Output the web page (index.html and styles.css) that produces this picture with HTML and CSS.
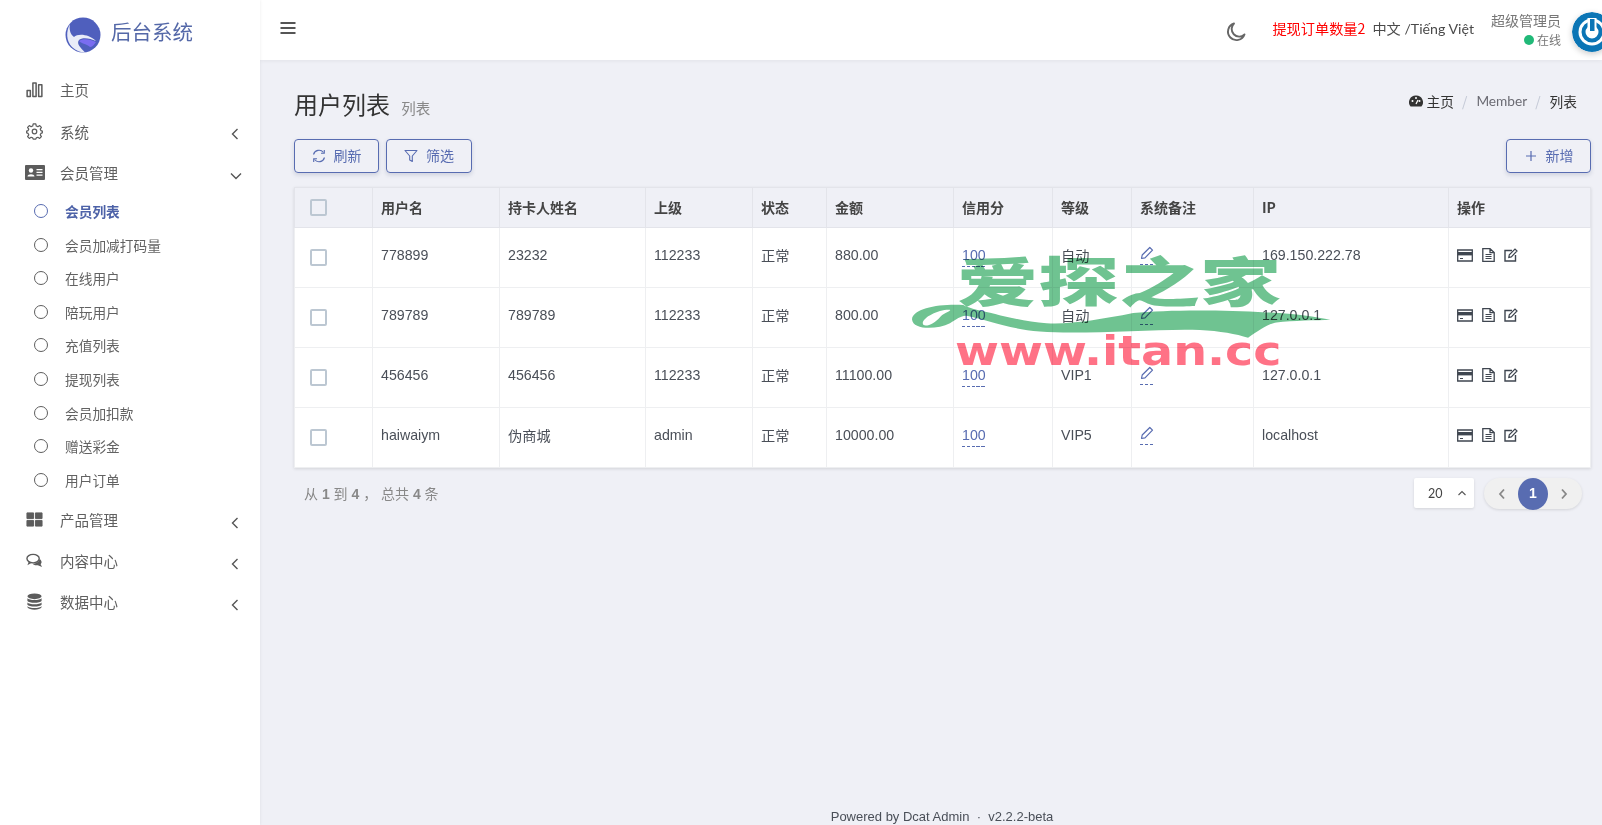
FILE: index.html
```html
<!DOCTYPE html>
<html>
<head>
    <title>后台系统</title>
    <link rel="stylesheet" href="styles.css">
</head>
<body>
    <svg class="icon-defs" xmlns="http://www.w3.org/2000/svg">
        <symbol id="i-chev-left" viewBox="0 0 10 14"><path d="M7.5 2 L2.5 7 L7.5 12" fill="none" stroke="currentColor" stroke-width="1.4"/></symbol>
        <symbol id="i-chev-down" viewBox="0 0 14 10"><path d="M2 2.5 L7 7.5 L12 2.5" fill="none" stroke="currentColor" stroke-width="1.4"/></symbol>
        <symbol id="i-pencil" viewBox="0 0 14 14"><path d="M1.5 12.5 L2.2 9 L9.8 1.5 L12.5 4.2 L5 11.8 Z" fill="none" stroke="currentColor" stroke-width="1.2" stroke-linejoin="round"/></symbol>
        <symbol id="i-card" viewBox="0 0 16 13"><path d="M.7 1 H15.3 V12 H.7 Z" fill="none" stroke="currentColor" stroke-width="1.3"/><rect x="1" y="3" width="14" height="3.4" fill="currentColor"/><path d="M3 9.5 H6" stroke="currentColor"/></symbol>
        <symbol id="i-file" viewBox="0 0 13 14"><path d="M.8 .7 H8 L12.2 4.6 V13.3 H.8 Z M8 .7 V4.6 H12.2" fill="none" stroke="currentColor" stroke-width="1.3"/><path d="M3.5 6.5 H9.5 M3.5 8.5 H9.5 M3.5 10.5 H9.5" stroke="currentColor"/></symbol>
        <symbol id="i-edit" viewBox="0 0 14 14"><path d="M8 2.5 H1 V13 H11.5 V7" fill="none" stroke="currentColor" stroke-width="1.4"/><path d="M4.8 9.4 L5.3 6.8 L11 1 L13 3 L7.3 8.9 Z" fill="none" stroke="currentColor" stroke-width="1.2"/></symbol>
    </svg>

    <div class="sidebar">
        <div class="brand">
            <svg class="brand-logo" viewBox="0 0 36 36">
                <circle cx="18" cy="18" r="17.5" fill="#4f5fbd"/>
                <path d="M5 7 C1 14 1 24 7 30 C11 34 16 35.5 20 35.5 C16 31 11 27 14 23 C17 20 25 21 31 24 C24 17 13 16 9 20 C5 17 4 12 5 7 Z" fill="#e9ecf8"/>
                <path d="M14 24 C18 21 25 22 31 25 C29 28 27 30 25 30 C22 27 17 27 14 24 Z" fill="#7a6df0"/>
            </svg>
            <span class="brand-name">后台系统</span>
        </div>
        <ul class="nav">
            <li class="nav-item">
                <svg class="nav-icon" viewBox="0 0 18 18"><path d="M1.2 10 H4.6 V16.5 H1.2 Z M7.3 2 H10.7 V16.5 H7.3 Z M13.4 4 H16.8 V16.5 H13.4 Z" fill="none" stroke="currentColor" stroke-width="1.6" stroke-linejoin="round"/></svg>
                <span class="nav-text">主页</span>
            </li>
            <li class="nav-item">
                <svg class="nav-icon" viewBox="0 0 18 18"><circle cx="9" cy="9" r="2.4" fill="none" stroke="currentColor" stroke-width="1.3"/><path d="M7.6 1 H10.4 L10.9 3.2 L12.6 3.9 L14.5 2.7 L16.3 4.6 L15.1 6.5 L15.8 8 L17.3 8.6 V10.4 L15.8 11 L15.1 12.5 L16.3 14.4 L14.5 16.3 L12.6 15.1 L10.9 15.8 L10.4 17 H7.6 L7.1 15.8 L5.4 15.1 L3.5 16.3 L1.7 14.4 L2.9 12.5 L2.2 11 L.7 10.4 V8.6 L2.2 8 L2.9 6.5 L1.7 4.6 L3.5 2.7 L5.4 3.9 L7.1 3.2 Z" fill="none" stroke="currentColor" stroke-width="1.3" stroke-linejoin="round"/></svg>
                <span class="nav-text">系统</span>
                <svg class="nav-arrow"><use href="#i-chev-left"/></svg>
            </li>
            <li class="nav-item">
                <svg class="nav-icon nav-icon-wide" viewBox="0 0 20 15"><path d="M1 0 H19 A1 1 0 0 1 20 1 V14 A1 1 0 0 1 19 15 H1 A1 1 0 0 1 0 14 V1 A1 1 0 0 1 1 0 Z" fill="currentColor"/><circle cx="6" cy="5.5" r="2.2" fill="#fff"/><path d="M2.5 11.5 C2.5 8.5 9.5 8.5 9.5 11.5 Z M11.5 4 H17.5 V5.2 H11.5 Z M11.5 6.8 H17.5 V8 H11.5 Z M11.5 9.6 H17.5 V10.8 H11.5 Z" fill="#fff"/></svg>
                <span class="nav-text">会员管理</span>
                <svg class="nav-arrow nav-arrow-down"><use href="#i-chev-down"/></svg>
            </li>
            <li class="sub-list">
                <div class="sub-item active"><span class="ring"></span>会员列表</div>
                <div class="sub-item"><span class="ring"></span>会员加减打码量</div>
                <div class="sub-item"><span class="ring"></span>在线用户</div>
                <div class="sub-item"><span class="ring"></span>陪玩用户</div>
                <div class="sub-item"><span class="ring"></span>充值列表</div>
                <div class="sub-item"><span class="ring"></span>提现列表</div>
                <div class="sub-item"><span class="ring"></span>会员加扣款</div>
                <div class="sub-item"><span class="ring"></span>赠送彩金</div>
                <div class="sub-item"><span class="ring"></span>用户订单</div>
            </li>
            <li class="nav-item">
                <svg class="nav-icon" viewBox="0 0 18 16"><path d="M1 1 H8 V7 H1 Z M10 1 H17 V7 H10 Z M1 9 H8 V15 H1 Z M10 9 H17 V15 H10 Z" fill="currentColor" stroke="currentColor" stroke-linejoin="round"/></svg>
                <span class="nav-text">产品管理</span>
                <svg class="nav-arrow"><use href="#i-chev-left"/></svg>
            </li>
            <li class="nav-item">
                <svg class="nav-icon" viewBox="0 0 18 16"><ellipse cx="7.5" cy="6" rx="6.5" ry="4.5" fill="none" stroke="currentColor" stroke-width="1.5"/><path d="M3 9 L1.5 13 L6 10.5 Z" fill="currentColor"/><path d="M14.5 6.5 C17.5 9 16.5 11 15.5 12 L17 15 L12.5 13 C10 13.5 7.5 12.5 7 11.5 C10.5 11.5 13.5 10 14.5 6.5 Z" fill="currentColor"/></svg>
                <span class="nav-text">内容中心</span>
                <svg class="nav-arrow"><use href="#i-chev-left"/></svg>
            </li>
            <li class="nav-item">
                <svg class="nav-icon" viewBox="0 0 18 18"><ellipse cx="9" cy="3.5" rx="7.5" ry="3" fill="currentColor"/><path d="M1.5 5.5 C3 8 15 8 16.5 5.5 V8.5 C15 11 3 11 1.5 8.5 Z M1.5 10 C3 12.5 15 12.5 16.5 10 V12.5 C15 15 3 15 1.5 12.5 Z M1.5 14 C3 16.5 15 16.5 16.5 14 V15 C15 18.5 3 18.5 1.5 15 Z" fill="currentColor"/></svg>
                <span class="nav-text">数据中心</span>
                <svg class="nav-arrow"><use href="#i-chev-left"/></svg>
            </li>
        </ul>
    </div>

    <div class="main">
        <div class="navbar">
            <svg class="hamburger" viewBox="0 0 16 14"><path d="M.5 2 H15.5 M.5 7 H15.5 M.5 12 H15.5" stroke="#555" stroke-width="1.8"/></svg>
            <div class="navbar-right">
                <svg class="moon" viewBox="0 0 20 20"><path d="M8 1.5 A8.5 8.5 0 1 0 18.5 12.5 A7.5 7.5 0 0 1 8 1.5 Z" fill="none" stroke="#666" stroke-width="1.9" stroke-linejoin="round"/></svg>
                <span class="order-count">提现订单数量2</span>
                <span class="lang">中文 /Tiếng Việt</span>
                <div class="user">
                    <div class="user-name">超级管理员</div>
                    <div class="user-status"><span class="dot"></span>在线</div>
                </div>
                <svg class="avatar" viewBox="0 0 40 40">
                    <circle cx="20" cy="20" r="20" fill="#0b75b5"/>
                    <circle cx="20" cy="20" r="13.5" fill="#fff"/>
                    <circle cx="20" cy="20" r="8.5" fill="none" stroke="#0b75b5" stroke-width="4"/>
                    <rect x="15.5" y="6" width="9" height="11" fill="#fff"/>
                    <rect x="18" y="7" width="4.5" height="12" fill="#0b75b5"/>
                </svg>
            </div>
        </div>

        <div class="content">
            <div class="page-head">
                <div>
                    <span class="page-title">用户列表</span>
                    <span class="page-sub">列表</span>
                </div>
                <div class="crumbs">
                    <svg class="crumb-icon" viewBox="0 0 14 12"><path d="M7 .5 A6.7 6.7 0 0 0 1.6 11.5 H12.4 A6.7 6.7 0 0 0 7 .5 Z" fill="#333"/><circle cx="7" cy="3" r="1" fill="#fff"/><circle cx="3.5" cy="6" r="1" fill="#fff"/><circle cx="10.5" cy="6" r="1" fill="#fff"/><path d="M7 9 L9 5" stroke="#fff" stroke-width="1.2"/></svg>
                    <span class="crumb-dark">主页</span>
                    <span class="crumb-sep">/</span>
                    <span class="crumb-mid">Member</span>
                    <span class="crumb-sep">/</span>
                    <span class="crumb-dark">列表</span>
                </div>
            </div>

            <div class="toolbar">
                <div class="btn-group">
                    <div class="btn">
                        <svg class="btn-icon" viewBox="0 0 14 14"><path d="M1.5 5.5 A5.7 5.7 0 0 1 11.5 3.5 M12.5 8.5 A5.7 5.7 0 0 1 2.5 10.5" fill="none" stroke="currentColor" stroke-width="1.1"/><path d="M12.3 1 V4.3 H9 M1.7 13 V9.7 H5" fill="none" stroke="currentColor" stroke-width="1.1"/></svg>
                        <span class="btn-text">刷新</span>
                    </div>
                    <div class="btn btn-wide">
                        <svg class="btn-icon" viewBox="0 0 14 14"><path d="M1 1.5 H13 L8.3 7 V12.5 L5.7 11 V7 Z" fill="none" stroke="currentColor" stroke-width="1.1" stroke-linejoin="round"/></svg>
                        <span class="btn-text">筛选</span>
                    </div>
                </div>
                <div class="btn">
                    <svg class="btn-icon" viewBox="0 0 14 14"><path d="M7 2 V12 M2 7 H12" stroke="currentColor" stroke-width="1.2"/></svg>
                    <span class="btn-text">新增</span>
                </div>
            </div>

            <table class="grid">
                <colgroup>
                    <col class="c-check"><col class="c-user"><col class="c-name"><col class="c-parent"><col class="c-state"><col class="c-money"><col class="c-score"><col class="c-level"><col class="c-note"><col class="c-ip"><col>
                </colgroup>
                <thead>
                    <tr>
                        <th class="cell-check"><span class="check"></span></th>
                        <th>用户名</th><th>持卡人姓名</th><th>上级</th><th>状态</th><th>金额</th><th>信用分</th><th>等级</th><th>系统备注</th><th>IP</th><th>操作</th>
                    </tr>
                </thead>
                <tbody>
                    <tr>
                        <td class="cell-check"><span class="check"></span></td>
                        <td>778899</td><td>23232</td><td>112233</td><td>正常</td><td>880.00</td>
                        <td><span class="editable">100</span></td><td>自动</td>
                        <td><span class="editable"><svg class="pencil"><use href="#i-pencil"/></svg></span></td>
                        <td>169.150.222.78</td>
                        <td><div class="actions"><svg class="a-card"><use href="#i-card"/></svg><svg class="a-file"><use href="#i-file"/></svg><svg class="a-edit"><use href="#i-edit"/></svg></div></td>
                    </tr>
                    <tr>
                        <td class="cell-check"><span class="check"></span></td>
                        <td>789789</td><td>789789</td><td>112233</td><td>正常</td><td>800.00</td>
                        <td><span class="editable">100</span></td><td>自动</td>
                        <td><span class="editable"><svg class="pencil"><use href="#i-pencil"/></svg></span></td>
                        <td>127.0.0.1</td>
                        <td><div class="actions"><svg class="a-card"><use href="#i-card"/></svg><svg class="a-file"><use href="#i-file"/></svg><svg class="a-edit"><use href="#i-edit"/></svg></div></td>
                    </tr>
                    <tr>
                        <td class="cell-check"><span class="check"></span></td>
                        <td>456456</td><td>456456</td><td>112233</td><td>正常</td><td>11100.00</td>
                        <td><span class="editable">100</span></td><td>VIP1</td>
                        <td><span class="editable"><svg class="pencil"><use href="#i-pencil"/></svg></span></td>
                        <td>127.0.0.1</td>
                        <td><div class="actions"><svg class="a-card"><use href="#i-card"/></svg><svg class="a-file"><use href="#i-file"/></svg><svg class="a-edit"><use href="#i-edit"/></svg></div></td>
                    </tr>
                    <tr>
                        <td class="cell-check"><span class="check"></span></td>
                        <td>haiwaiym</td><td>伪商城</td><td>admin</td><td>正常</td><td>10000.00</td>
                        <td><span class="editable">100</span></td><td>VIP5</td>
                        <td><span class="editable"><svg class="pencil"><use href="#i-pencil"/></svg></span></td>
                        <td>localhost</td>
                        <td><div class="actions"><svg class="a-card"><use href="#i-card"/></svg><svg class="a-file"><use href="#i-file"/></svg><svg class="a-edit"><use href="#i-edit"/></svg></div></td>
                    </tr>
                </tbody>
            </table>

            <div class="table-foot">
                <div class="summary">从 <b>1</b> 到 <b>4</b> ， 总共 <b>4</b> 条</div>
                <div class="paging">
                    <div class="per-page">20<svg class="per-arrow" viewBox="0 0 10 6"><path d="M1.5 5 L5 1.5 L8.5 5" fill="none" stroke="#555" stroke-width="1.1"/></svg></div>
                    <div class="pager">
                        <svg class="pager-arrow" viewBox="0 0 8 12"><path d="M6 1.5 L2 6 L6 10.5" fill="none" stroke="#888" stroke-width="1.8"/></svg>
                        <span class="pager-num">1</span>
                        <svg class="pager-arrow" viewBox="0 0 8 12"><path d="M2 1.5 L6 6 L2 10.5" fill="none" stroke="#888" stroke-width="1.8"/></svg>
                    </div>
                </div>
            </div>
        </div>

        <div class="footer">Powered by Dcat Admin &nbsp;·&nbsp; v2.2.2-beta</div>
    </div>

    <!-- watermark over the table -->
    <div class="watermark">
        <svg class="wm-swoosh" viewBox="30 220 1270 110" preserveAspectRatio="none"><path d="M190 226 C120 222 40 235 36 268 C38 300 110 300 150 280 C170 268 185 256 200 258 C260 270 320 296 420 305 C560 315 780 295 900 300 C960 303 1010 312 1045 323 C1080 300 1110 280 1130 278 C1180 272 1250 272 1292 270 C1250 262 1180 250 1100 248 C960 240 800 240 700 250 C600 270 500 285 440 280 C360 275 280 250 230 240 C215 236 200 232 190 226 Z M70 285 C60 270 100 245 140 240 C170 238 130 250 120 262 C105 280 80 292 70 285 Z" fill="#6fc391" fill-rule="evenodd"/></svg>
        <div class="wm-cn">爱探之家</div>
        <div class="wm-url">www.itan.cc</div>
    </div>
</body>
</html>
```

FILE: styles.css
```css
* {
    box-sizing: border-box;
}

html, body {
    height: 100%;
}

body {
    margin: 0;
    display: flex;
    overflow: hidden;
    background: #eff0f6;
    font-family: "Liberation Sans", "Noto Sans CJK SC", sans-serif;
    font-size: 14px;
    color: #414750;
    position: relative;
}

.icon-defs {
    position: absolute;
    width: 0;
    height: 0;
}

/* sidebar */
.sidebar {
    width: 260px;
    flex-shrink: 0;
    background: #fff;
    box-shadow: 0 0 3px rgba(0, 0, 0, 0.08);
    z-index: 2;
}

.brand {
    height: 69px;
    display: flex;
    align-items: flex-start;
    padding: 17px 0 0 65px;
}

.brand-logo {
    width: 36px;
    height: 36px;
    margin-right: 10px;
}

.brand-name {
    font-family: "Noto Sans CJK SC", sans-serif;
    font-size: 20.5px;
    line-height: 29px;
    color: #5468a8;
}

.nav {
    list-style: none;
    margin: 0;
    padding: 0;
    color: #5c5c5c;
}

.nav-item {
    height: 41.4px;
    display: flex;
    align-items: center;
    position: relative;
    padding-left: 26px;
    font-family: "Noto Sans CJK SC", sans-serif;
}

.nav-icon {
    width: 17px;
    height: 17px;
    margin-right: 17px;
    flex-shrink: 0;
}

.nav-icon-wide {
    width: 20px;
    height: 15px;
    margin-left: -1px;
    margin-right: 15px;
}

.nav-text {
    font-size: 14.5px;
    color: #5f5f5f;
}

.nav-arrow {
    position: absolute;
    left: 230px;
    top: 17px;
    width: 10px;
    height: 14px;
    color: #555;
}

.nav-arrow-down {
    left: 229px;
    top: 19px;
    width: 14px;
    height: 10px;
}

.sub-list {
    padding: 1px 0 2px;
    font-family: "Noto Sans CJK SC", sans-serif;
}

.sub-item {
    height: 33.6px;
    display: flex;
    align-items: center;
    padding-left: 34px;
    font-size: 13.7px;
    color: #626262;
}

.sub-item.active {
    color: #4d62a8;
    font-weight: 700;
}

.ring {
    width: 14px;
    height: 14px;
    flex-shrink: 0;
    border: 1.5px solid #5e5e5e;
    border-radius: 50%;
    margin-right: 17px;
}

.active .ring {
    border-color: #586cb1;
}

/* main column */
.main {
    flex: 1;
    min-width: 0;
    display: flex;
    flex-direction: column;
}

.navbar {
    height: 60px;
    flex-shrink: 0;
    background: #fff;
    display: flex;
    align-items: center;
    justify-content: space-between;
    padding-left: 20px;
    box-shadow: 0 1px 4px rgba(0, 0, 0, 0.06);
}

.hamburger {
    width: 16px;
    height: 14px;
    margin-top: -4px;
}

.navbar-right {
    display: flex;
    align-items: center;
    margin-right: -10px;
    font-family: "Noto Sans CJK SC", sans-serif;
}

.moon {
    width: 20px;
    height: 20px;
    margin-right: 26px;
    margin-top: 4px;
}

.order-count {
    color: #f00;
    font-size: 14.2px;
    margin-right: 7px;
    margin-top: -4px;
}

.lang {
    font-family: "Lato", "Noto Sans CJK SC", sans-serif;
    font-size: 14.2px;
    color: #4a4a4a;
    margin-right: 17px;
    margin-top: -4px;
}

.user {
    text-align: right;
    margin-right: 11px;
    color: #777;
    margin-top: -3px;
}

.user-name {
    font-size: 14px;
    line-height: 22px;
}

.user-status {
    font-size: 12px;
    line-height: 18px;
    display: flex;
    align-items: center;
    justify-content: flex-end;
}

.dot {
    width: 10px;
    height: 10px;
    border-radius: 50%;
    background: #21b978;
    margin-right: 3px;
}

.avatar {
    width: 40px;
    height: 40px;
    flex-shrink: 0;
    margin-top: 4px;
    border-radius: 50%;
    box-shadow: 0 2px 6px rgba(0, 0, 0, 0.2);
}

.content {
    flex: 1;
    padding: 0 11px 0 34px;
}

.page-head {
    display: flex;
    justify-content: space-between;
    align-items: flex-start;
    padding-top: 26px;
    height: 79px;
    font-family: "Noto Sans CJK SC", sans-serif;
}

.page-title {
    font-size: 24px;
    line-height: 36px;
    color: #333;
}

.page-sub {
    font-size: 14.5px;
    color: #888;
    margin-left: 8px;
}

.crumbs {
    display: flex;
    align-items: center;
    margin: 5px 14px 0 0;
    font-size: 13.7px;
    line-height: 20px;
}

.crumb-icon {
    width: 14px;
    height: 12px;
    margin-right: 4px;
}

.crumb-dark {
    color: #333;
}

.crumb-mid {
    font-family: "Lato", sans-serif;
    color: #6b6b73;
}

.crumb-sep {
    color: #c4c9d6;
    margin: 0 9px 0 8px;
}

.toolbar {
    display: flex;
    justify-content: space-between;
    height: 48px;
}

.btn-group {
    display: flex;
    gap: 7px;
}

.btn {
    width: 85px;
    height: 34px;
    display: flex;
    align-items: center;
    justify-content: center;
    gap: 8px;
    border: 1px solid #586cb1;
    border-radius: 4px;
    color: #586cb1;
    font-family: "Noto Sans CJK SC", sans-serif;
    font-size: 14px;
    box-shadow: 0 2px 4px rgba(60, 70, 110, 0.18);
}

.btn-wide {
    width: 86px;
}

.btn-text {
    margin-top: -3px;
}

.btn-icon {
    width: 14px;
    height: 14px;
}

/* table */
.grid {
    width: 100%;
    table-layout: fixed;
    border-collapse: collapse;
    background: #fff;
    box-shadow: 0 1px 3px rgba(0, 0, 0, 0.12);
}

.c-check { width: 78px; }
.c-user { width: 127px; }
.c-name { width: 146px; }
.c-parent { width: 107px; }
.c-state { width: 74px; }
.c-money { width: 127px; }
.c-score { width: 99px; }
.c-level { width: 79px; }
.c-note { width: 122px; }
.c-ip { width: 195px; }

.grid th {
    height: 40px;
    background: #eff0f6;
    text-align: left;
    font-family: "Noto Sans CJK SC", sans-serif;
    font-size: 14px;
    color: #444;
    padding: 0 8px 2px;
    border: 1px solid #e3e4ea;
}

.grid td {
    height: 60px;
    padding: 0 8px 5px;
    font-size: 14.2px;
    color: #4a4f58;
    font-family: "Liberation Sans", "Noto Sans CJK SC", sans-serif;
    border: 1px solid #eeeff1;
}

.grid .cell-check {
    padding: 0 0 0 15px;
}

.check {
    display: block;
    width: 17px;
    height: 17px;
    border: 2px solid #bcc7d2;
    border-radius: 2px;
    background: #fff;
}

.grid thead .check {
    background: transparent;
}

.editable {
    display: inline-block;
    color: #586cb1;
    line-height: 16px;
    margin-top: 4px;
    padding-bottom: 4px;
    background: repeating-linear-gradient(90deg, #586cb1 0 3.5px, transparent 3.5px 4.8px) left bottom / 100% 1px no-repeat;
}

.pencil {
    display: block;
    width: 14px;
    height: 14px;
    margin-bottom: 1px;
}

.actions {
    display: flex;
    align-items: center;
    color: #3f4650;
}

.a-card {
    width: 16px;
    height: 13px;
    margin-right: 9px;
}

.a-file {
    width: 13px;
    height: 14px;
    margin-right: 9px;
}

.a-edit {
    width: 14px;
    height: 14px;
}

.table-foot {
    display: flex;
    justify-content: space-between;
    padding: 10px 9px 0 10px;
}

.summary {
    color: #888;
    font-size: 14px;
    line-height: 32px;
    font-family: "Liberation Sans", "Noto Sans CJK SC", sans-serif;
}

.paging {
    display: flex;
    gap: 10px;
}

.per-page {
    width: 60px;
    height: 30px;
    background: #fff;
    border-radius: 2px;
    display: flex;
    align-items: center;
    justify-content: space-between;
    padding: 0 7px 0 14px;
    font-family: "Lato", sans-serif;
    font-size: 12.5px;
    color: #444;
    box-shadow: 0 1px 3px rgba(0, 0, 0, 0.12);
}

.per-arrow {
    width: 10px;
    height: 6px;
}

.pager {
    width: 98px;
    height: 31px;
    background: #f0f0f0;
    border-radius: 16px;
    display: flex;
    align-items: center;
    justify-content: space-between;
    padding: 0 14px;
    box-shadow: 0 1px 3px rgba(0, 0, 0, 0.12);
}

.pager-arrow {
    width: 8px;
    height: 12px;
}

.pager-num {
    width: 30px;
    height: 32px;
    border-radius: 50%;
    background: #586cb1;
    color: #fff;
    font-weight: 700;
    font-size: 14px;
    text-align: center;
    line-height: 31px;
}

.footer {
    height: 16px;
    margin-left: 22px;
    text-align: center;
    font-size: 13px;
    line-height: 16px;
    color: #4a4f58;
}

/* watermark */
.watermark {
    position: absolute;
    left: 910px;
    top: 240px;
    width: 430px;
    height: 140px;
    pointer-events: none;
    mix-blend-mode: multiply;
    z-index: 3;
}

.wm-swoosh {
    position: absolute;
    left: 0;
    top: 63px;
    width: 423px;
    height: 37px;
}

.wm-cn {
    position: absolute;
    left: 47px;
    top: -6px;
    width: 300px;
    font-family: "Noto Sans CJK SC", sans-serif;
    font-weight: 900;
    font-size: 75px;
    line-height: 90px;
    color: #6fc391;
    white-space: nowrap;
    transform: scale(1.08, 0.72);
    transform-origin: left center;
}

.wm-url {
    position: absolute;
    left: 45px;
    top: 88px;
    font-family: "DejaVu Sans", sans-serif;
    font-weight: 700;
    font-size: 40px;
    line-height: 46px;
    color: #ff7286;
    white-space: nowrap;
    transform: scaleX(1.19);
    transform-origin: left center;
}
```
